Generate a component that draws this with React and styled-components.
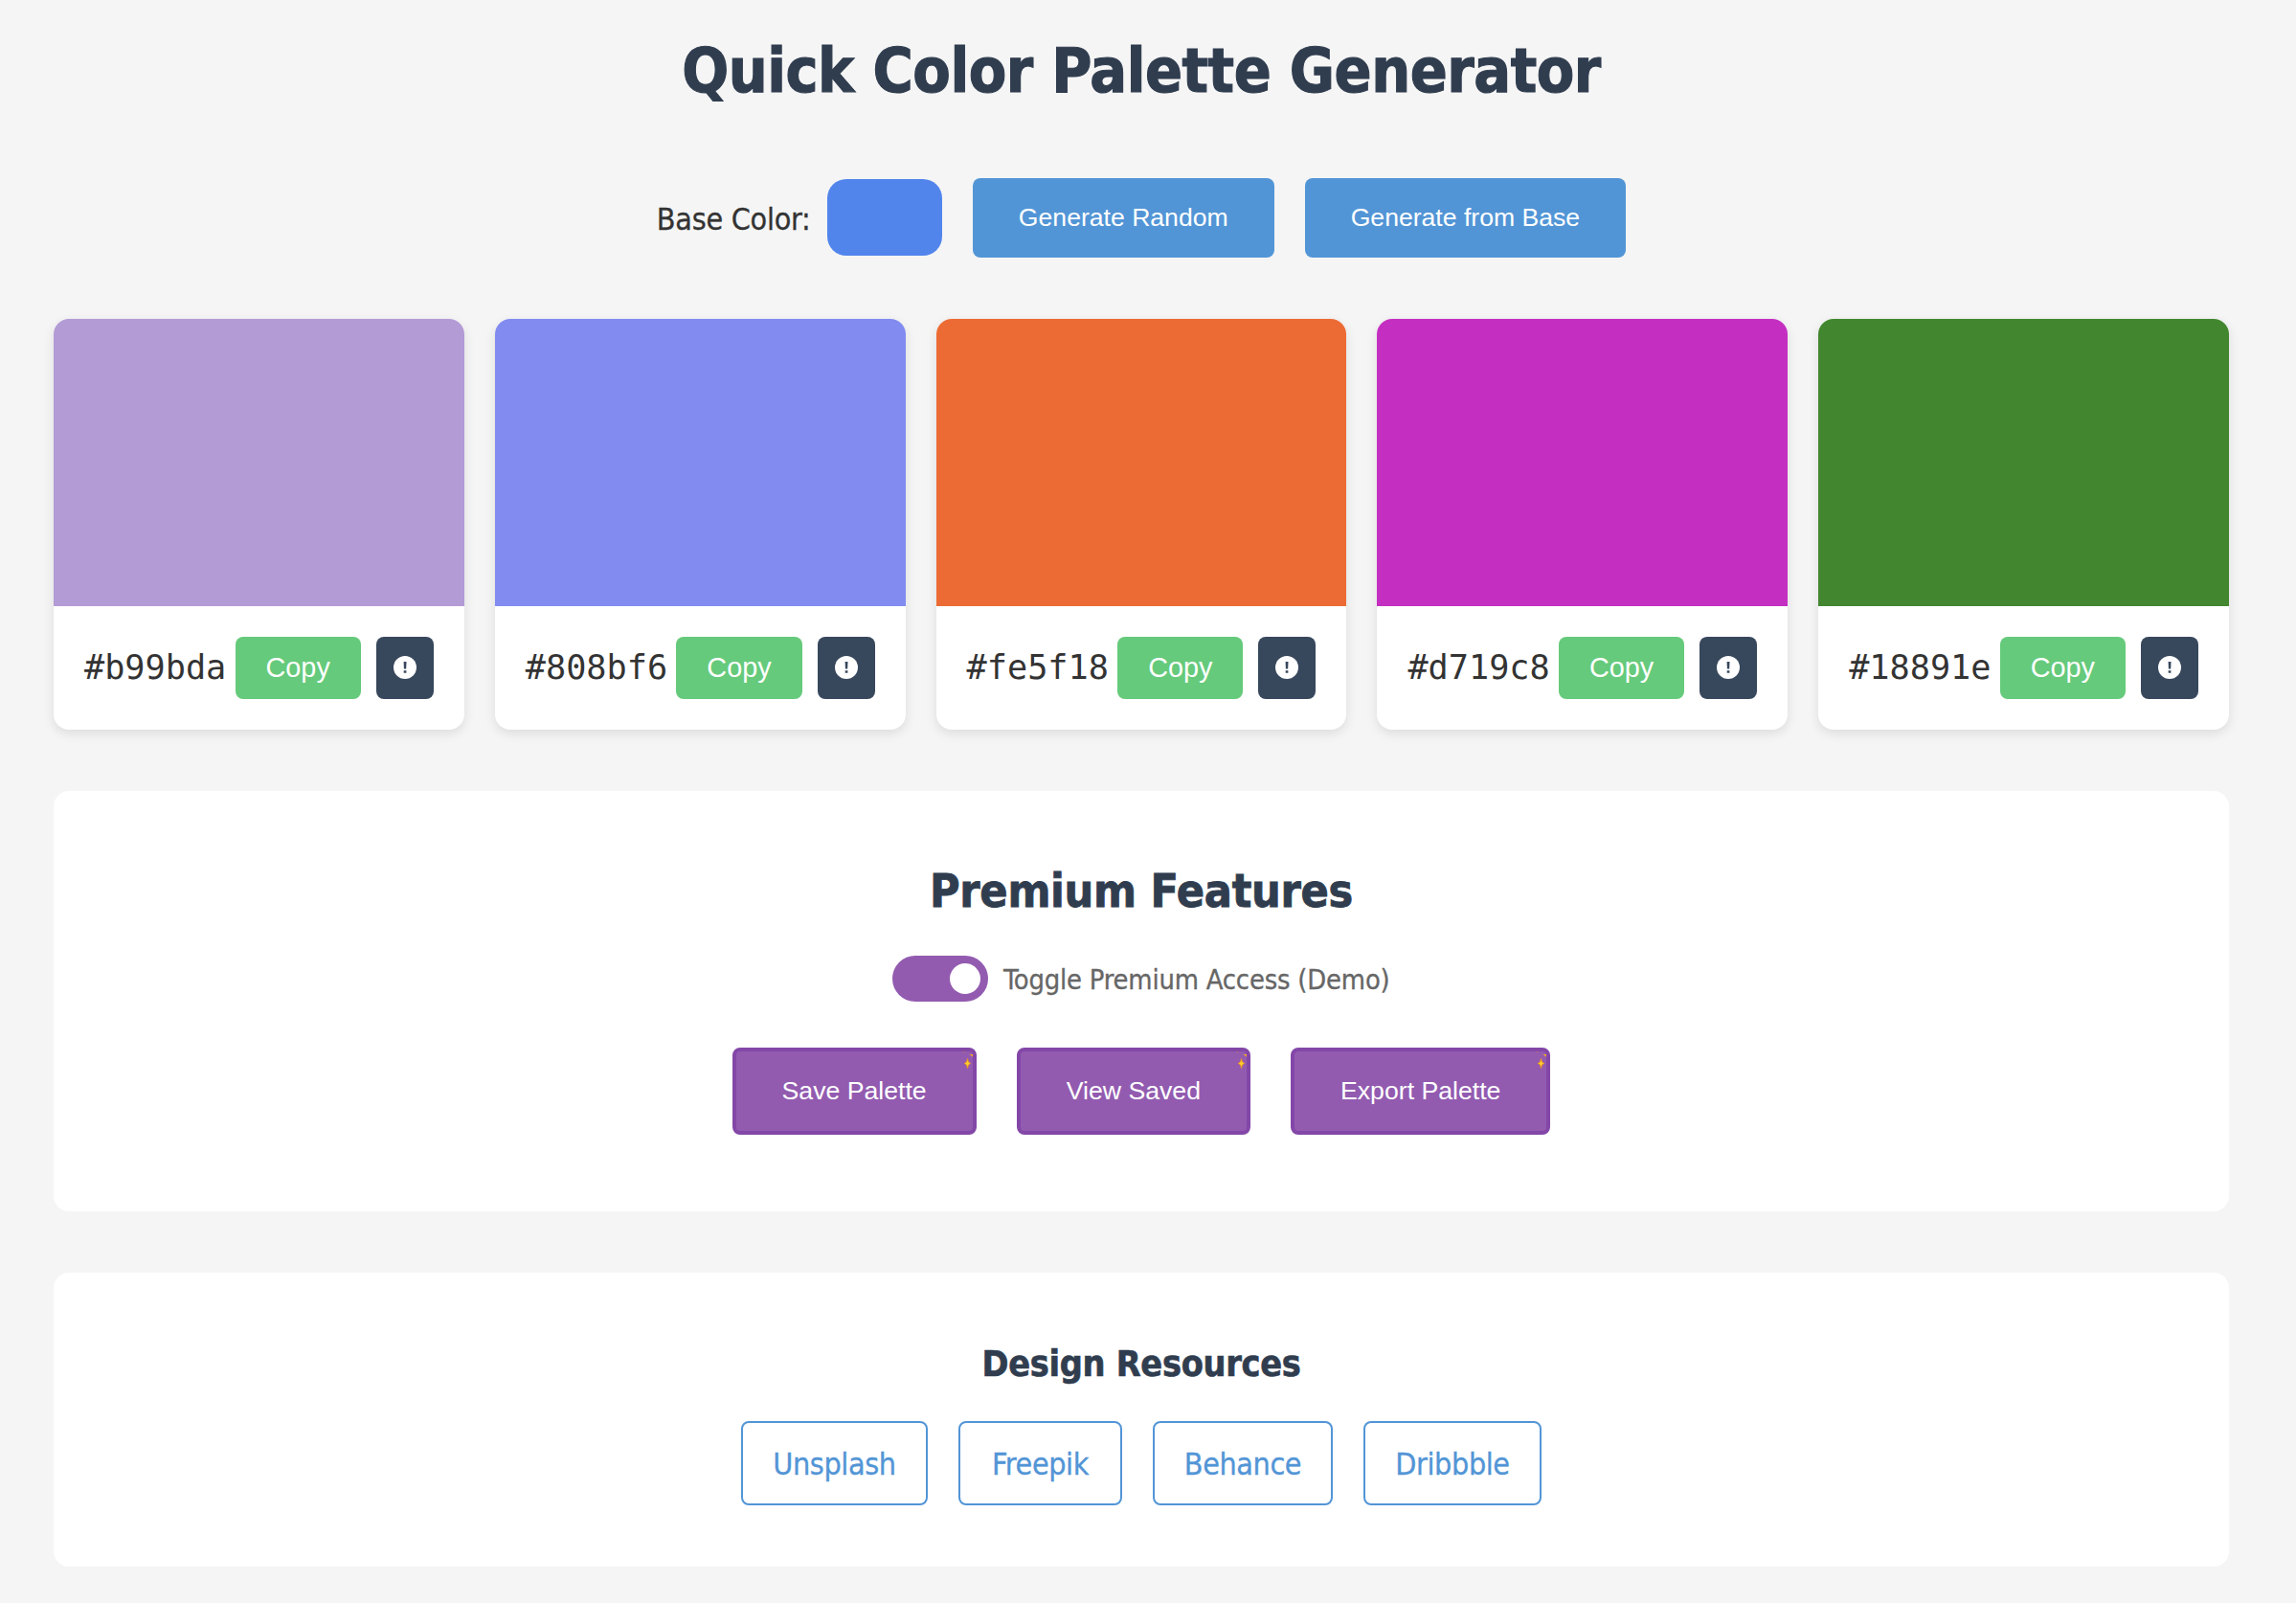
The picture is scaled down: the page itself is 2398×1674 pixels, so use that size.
import React, { useState } from 'react';
import styled, { createGlobalStyle } from 'styled-components';

const sans = '"DejaVu Sans Condensed", "DejaVu Sans", sans-serif';

const GlobalStyle = createGlobalStyle`
  * { box-sizing: border-box; }
  body {
    margin: 0;
    background: #f5f5f5;
    color: #333;
    font-family: ${sans};
    font-stretch: condensed;
    font-size: 32px;
  }
  button { font-family: "Liberation Sans", Arial, sans-serif; border: 0; cursor: pointer; }
`;

const Page = styled.main`
  width: 2272px;
  margin-left: 56px;
  padding-top: 35px;
`;

const Title = styled.h1`
  margin: 0;
  height: 77px;
  line-height: 78px;
  font-size: 64px;
  letter-spacing: -0.46px;
  -webkit-text-stroke: 1.1px currentColor;
  text-align: center;
  color: #303d4f;
  white-space: nowrap;
`;

const Controls = styled.div`
  display: flex;
  justify-content: center;
  align-items: center;
  gap: 32px;
  height: 83px;
  margin-top: 74px;
`;

const BaseLabel = styled.label`
  display: flex;
  align-items: center;
  gap: 16px;
  height: 80px;
  margin-bottom: 1px;
`;

const BaseText = styled.span`
  width: 162px;
  padding-top: 3px;
  line-height: 40px;
  letter-spacing: -0.27px;
  -webkit-text-stroke: 0.3px currentColor;
  white-space: nowrap;
`;

const BaseSwatch = styled.span`
  width: 120px;
  height: 80px;
  border-radius: 20px;
  background: #5285ec;
`;

const ActionButton = styled.button`
  height: 83px;
  padding: 0 48px;
  border-radius: 8px;
  background: #5295d6;
  color: #fff;
  font-size: 26.6px;
  white-space: nowrap;
`;

const Palette = styled.section`
  display: grid;
  grid-template-columns: repeat(5, 1fr);
  gap: 32px;
  margin-top: 64px;
`;

const Card = styled.article`
  min-width: 0;
  height: 429px;
  border-radius: 16px;
  overflow: hidden;
  background: #fff;
  box-shadow: 0 4px 12px rgba(0, 0, 0, 0.1);
`;

const Swatch = styled.div`
  height: 300px;
  background: ${(p) => p.$color};
`;

const CardBar = styled.div`
  display: flex;
  justify-content: space-between;
  align-items: center;
  padding: 32px;
`;

const Hex = styled.span`
  width: 148px;
  padding-bottom: 2px;
  font-family: "DejaVu Sans Mono", monospace;
  font-size: 35.2px;
  line-height: 42px;
  white-space: nowrap;
`;

const CardActions = styled.div`
  display: flex;
  gap: 16px;
`;

const CopyButton = styled.button`
  height: 65px;
  padding: 0 32px;
  border-radius: 8px;
  background: #65ca7b;
  color: #fff;
  font-size: 28.8px;
`;

const InfoButton = styled.button`
  display: flex;
  align-items: center;
  justify-content: center;
  width: 60px;
  height: 65px;
  padding: 0 0 1px;
  border-radius: 8px;
  background: #37475c;
`;

const Panel = styled.section`
  display: flex;
  flex-direction: column;
  align-items: center;
  height: ${(p) => p.$height}px;
  margin-top: 64px;
  padding-top: ${(p) => p.$top}px;
  border-radius: 16px;
  background: #fff;
`;

const PanelTitle = styled.h2`
  margin: 0;
  color: #303d4f;
  font-size: ${(p) => p.$size}px;
  line-height: ${(p) => p.$line}px;
  letter-spacing: -0.28px;
  -webkit-text-stroke: ${(p) => p.$size / 60}px currentColor;
  white-space: nowrap;
`;

const ToggleRow = styled.label`
  display: flex;
  align-items: center;
  gap: 16px;
  height: 48px;
  margin-top: 38px;
`;

const ToggleTrack = styled.span`
  display: flex;
  justify-content: ${(p) => (p.$on ? 'flex-end' : 'flex-start')};
  width: 100px;
  height: 48px;
  padding: 8px;
  border-radius: 24px;
  background: ${(p) => (p.$on ? '#925bb0' : '#ccc')};
`;

const ToggleKnob = styled.span`
  width: 32px;
  height: 32px;
  border-radius: 50%;
  background: #fff;
`;

const ToggleText = styled.span`
  width: 404px;
  padding-top: 2px;
  color: #666;
  font-size: 28.8px;
  line-height: 36px;
  letter-spacing: -0.18px;
  -webkit-text-stroke: 0.3px currentColor;
  white-space: nowrap;
`;

const PremiumRow = styled.div`
  display: flex;
  gap: 42px;
  margin-top: 48px;
`;

const PremiumButton = styled.button`
  position: relative;
  height: 91px;
  padding: 0 48px;
  border: 4px solid #8347a8;
  border-radius: 8px;
  background: #925bb0;
  color: #fff;
  font-size: 26.667px;
  white-space: nowrap;
  overflow: hidden;
`;

const Sparkle = styled.svg`
  position: absolute;
  top: 0;
  right: 0;
  width: 12px;
  height: 18px;
`;

const LinkRow = styled.nav`
  display: flex;
  gap: 32px;
  margin-top: 37px;
`;

const ResourceLink = styled.a`
  display: flex;
  align-items: center;
  justify-content: center;
  width: ${(p) => p.$width}px;
  height: 88px;
  padding-top: 2px;
  border: 2px solid #5295d6;
  border-radius: 8px;
  color: #5295d6;
  line-height: 40px;
  letter-spacing: -0.4px;
  -webkit-text-stroke: 0.3px currentColor;
  text-decoration: none;
`;

const colors = [
  ['#b99bda', '#b39bd6'],
  ['#808bf6', '#828bf0'],
  ['#fe5f18', '#ec6b34'],
  ['#d719c8', '#c42fc1'],
  ['#18891e', '#428730'],
];

const links = [['Unsplash', 195], ['Freepik', 171], ['Behance', 188], ['Dribbble', 186]];

function InfoIcon() {
  return (
    <svg width="24" height="24" viewBox="0 0 24 24">
      <circle cx="12" cy="12" r="12" fill="#fff" />
      <path d="M10.6 6h2.9l-.3 7.4h-2.3zM10.7 15.2h2.7v2.6h-2.7z" fill="#37475c" />
    </svg>
  );
}

function SparkleMark() {
  return (
    <Sparkle viewBox="0 0 12 18">
      <path d="M6.5 7.5 Q6.9 12 9.8 12.5 Q6.9 13 6.5 17.5 Q6.1 13 3.2 12.5 Q6.1 12 6.5 7.5z" fill="#ffd02b" stroke="#f5941c" strokeWidth=".8" />
      <path d="M8 3h4v2.2h-1.2l-.4-1.2z" fill="#fcab1c" />
      <path d="M1.5 0h1.6l-.5 1.6z" fill="#d5714a" />
    </Sparkle>
  );
}

export default function App() {
  const [premium] = useState(true);
  return (
    <Page>
      <GlobalStyle />
      <Title>Quick Color Palette Generator</Title>
      <Controls>
        <BaseLabel>
          <BaseText>Base Color:</BaseText>
          <BaseSwatch />
        </BaseLabel>
        <ActionButton>Generate Random</ActionButton>
        <ActionButton>Generate from Base</ActionButton>
      </Controls>
      <Palette>
        {colors.map(([hex, shown]) => (
          <Card key={hex}>
            <Swatch $color={shown} />
            <CardBar>
              <Hex>{hex}</Hex>
              <CardActions>
                <CopyButton>Copy</CopyButton>
                <InfoButton><InfoIcon /></InfoButton>
              </CardActions>
            </CardBar>
          </Card>
        ))}
      </Palette>
      <Panel $height={439} $top={74}>
        <PanelTitle $size={48} $line={60}>Premium Features</PanelTitle>
        <ToggleRow>
          <ToggleTrack $on={premium}><ToggleKnob /></ToggleTrack>
          <ToggleText>Toggle Premium Access (Demo)</ToggleText>
        </ToggleRow>
        <PremiumRow>
          {['Save Palette', 'View Saved', 'Export Palette'].map((t) => (
            <PremiumButton key={t}>{t}<SparkleMark /></PremiumButton>
          ))}
        </PremiumRow>
      </Panel>
      <Panel $height={307} $top={72}>
        <PanelTitle $size={37.44} $line={46}>Design Resources</PanelTitle>
        <LinkRow>
          {links.map(([name, width]) => (
            <ResourceLink key={name} href="#" $width={width}>{name}</ResourceLink>
          ))}
        </LinkRow>
      </Panel>
    </Page>
  );
}
